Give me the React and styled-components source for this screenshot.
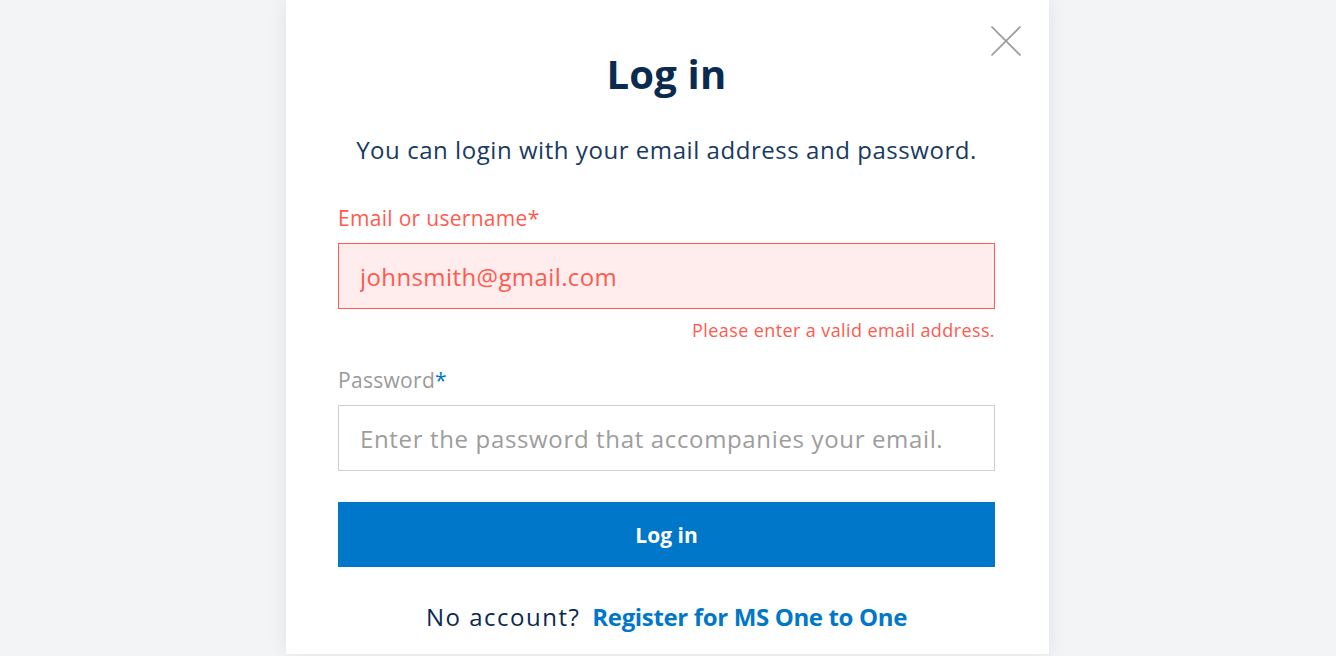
import React from 'react';
import styled, { createGlobalStyle } from 'styled-components';

const GlobalStyle = createGlobalStyle`
  html, body {
    margin: 0;
    padding: 0;
    background: #f3f4f6;
    font-family: "Open Sans", "Liberation Sans", sans-serif;
  }
  * {
    box-sizing: border-box;
  }
`;

const Page = styled.div`
  display: flex;
  justify-content: center;
  height: 656px;
  overflow: hidden;
`;

const Modal = styled.div`
  position: relative;
  width: 763px;
  height: 654px;
  margin-left: -1px;
  padding: 0 54px 0 52px;
  background: #ffffff;
  box-shadow: 0 0 18px rgba(30, 40, 60, 0.09);
  display: flex;
  flex-direction: column;
`;

const CloseButton = styled.button`
  position: absolute;
  top: 26px;
  right: 28px;
  width: 30px;
  height: 30px;
  padding: 0;
  border: none;
  background: none;
  cursor: pointer;
`;

const Title = styled.h1`
  margin: 48px 0 0;
  text-align: center;
  font-size: 40px;
  line-height: 52px;
  font-weight: 700;
  color: #0b2a50;
  letter-spacing: 0.2px;
`;

const Subtitle = styled.p`
  margin: 34px 0 0;
  text-align: center;
  font-size: 24px;
  line-height: 32px;
  color: #183a62;
  letter-spacing: 0.55px;
`;

const Field = styled.div`
  display: flex;
  flex-direction: column;
  margin-top: ${(p) => p.$top}px;
`;

const Label = styled.label`
  font-size: 21px;
  line-height: 28px;
  letter-spacing: 0.3px;
  color: ${(p) => (p.$error ? '#ff5a4e' : '#9a9a9a')};
`;

const Star = styled.span`
  color: ${(p) => (p.$error ? '#ff5a4e' : '#0077c8')};
`;

const Input = styled.input`
  margin-top: 11px;
  height: 66px;
  width: 100%;
  padding: 0 21px;
  font-family: inherit;
  font-size: 24px;
  letter-spacing: ${(p) => (p.$error ? 0.4 : 0.65)}px;
  border: 1px solid ${(p) => (p.$error ? '#ff5a4e' : '#cfcfcf')};
  background: ${(p) => (p.$error ? '#ffeded' : '#ffffff')};
  color: ${(p) => (p.$error ? '#ff5a4e' : '#333')};
  outline: none;
  &::placeholder {
    color: #9d9d9d;
  }
`;

const ErrorText = styled.div`
  margin-top: 9px;
  text-align: right;
  font-size: 18px;
  line-height: 24px;
  letter-spacing: 0.4px;
  color: #ff5a4e;
`;

const SubmitButton = styled.button`
  margin-top: 31px;
  height: 65px;
  width: 100%;
  border: none;
  background: #0077c8;
  color: #ffffff;
  font-family: inherit;
  font-size: 21px;
  font-weight: 700;
  cursor: pointer;
`;

const Footer = styled.p`
  margin: 34px 0 0;
  text-align: center;
  font-size: 24px;
  line-height: 32px;
  color: #0b2a50;
  letter-spacing: 1.5px;
`;

const RegisterLink = styled.a`
  margin-left: 12px;
  color: #0077c8;
  font-weight: 700;
  text-decoration: none;
  letter-spacing: -0.35px;
`;

function CloseIcon() {
  return (
    <svg width="30" height="30" viewBox="0 0 30 30" fill="none">
      <path d="M0.5 0.5L29.5 29.5M29.5 0.5L0.5 29.5" stroke="#9b9b9b" strokeWidth="1.6" />
    </svg>
  );
}

export default function App() {
  return (
    <>
      <GlobalStyle />
      <Page>
        <Modal>
          <CloseButton aria-label="Close">
            <CloseIcon />
          </CloseButton>
          <Title>Log in</Title>
          <Subtitle>You can login with your email address and password.</Subtitle>
          <Field $top={38}>
            <Label $error>
              Email or username<Star $error>*</Star>
            </Label>
            <Input $error defaultValue="johnsmith@gmail.com" />
            <ErrorText>Please enter a valid email address.</ErrorText>
          </Field>
          <Field $top={24}>
            <Label>
              Password<Star>*</Star>
            </Label>
            <Input type="password" placeholder="Enter the password that accompanies your email." />
          </Field>
          <SubmitButton>Log in</SubmitButton>
          <Footer>
            No account?
            <RegisterLink href="#">Register for MS One to One</RegisterLink>
          </Footer>
        </Modal>
      </Page>
    </>
  );
}
